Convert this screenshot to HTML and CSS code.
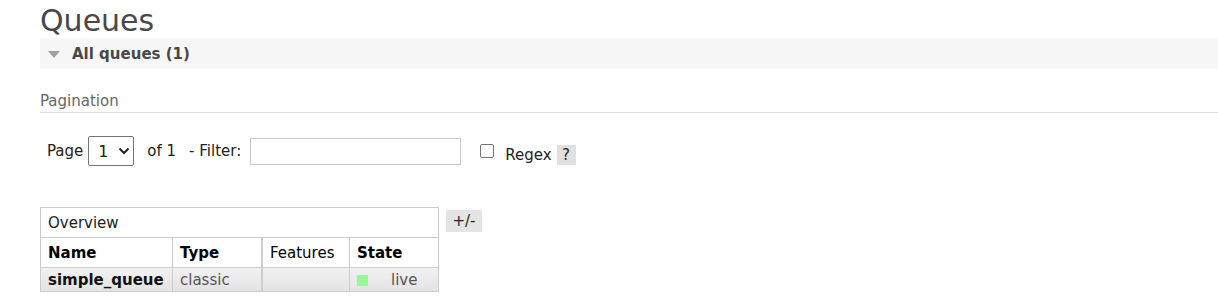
FILE: index.html
```html
<!DOCTYPE html>
<html>
<head>
<meta charset="utf-8">
<link rel="stylesheet" href="styles.css">
</head>
<body>
<div class="main">
  <h1 class="title">Queues</h1>
  <div class="section">
    <h2 class="section-head"><span class="tri"></span>All queues (1)</h2>
    <div class="section-body">
      <h3 class="pag-title">Pagination</h3>
      <div class="pag-row">
        <span class="lbl">Page</span>
        <div class="select"><span>1</span><svg class="chev" width="12" height="8" viewBox="0 0 12 8"><path d="M1.5 1.5 L6 6 L10.5 1.5" fill="none" stroke="#222" stroke-width="2"/></svg></div>
        <span class="lbl of">of 1</span>
        <span class="lbl filt">- Filter:</span>
        <div class="input"></div>
        <div class="check"></div>
        <span class="lbl regex">Regex</span>
        <span class="help">?</span>
      </div>
      <div class="table-wrap">
        <table class="list">
          <thead>
            <tr><th colspan="4" class="ov">Overview</th></tr>
            <tr>
              <th class="c-name b">Name</th>
              <th class="c-type b">Type</th>
              <th class="c-feat">Features</th>
              <th class="c-state b">State</th>
            </tr>
          </thead>
          <tbody>
            <tr class="alt">
              <td class="b dark">simple_queue</td>
              <td>classic</td>
              <td class="c-feat"></td>
              <td><span class="dot"></span><span class="live">live</span></td>
            </tr>
          </tbody>
        </table>
        <span class="plusminus">+/-</span>
      </div>
    </div>
  </div>
</div>
</body>
</html>
```
FILE: styles.css
```css
html, body { margin: 0; padding: 0; background: #fff; }
body { font-family: "DejaVu Sans", Verdana, sans-serif; color: #484848; }
.main { padding-left: 40px; }
.title {
  margin: 0;
  padding-top: 3px;
  font-size: 30px;
  line-height: 35px;
  font-weight: normal;
  color: #484848;
}
.section-head {
  margin: 0;
  height: 31px;
  display: flex;
  align-items: center;
  background: #f7f7f7;
  font-size: 15px;
  font-weight: bold;
  color: #484848;
  padding-left: 8px;
}
.tri {
  width: 0; height: 0;
  border-left: 6px solid transparent;
  border-right: 6px solid transparent;
  border-top: 7px solid #a0a0a0;
  margin-right: 12px;
  margin-top: 1px;
}
.pag-title {
  margin: 23px 0 0 0;
  font-size: 15px;
  font-weight: normal;
  color: #666;
  line-height: 18px;
  padding-bottom: 2px;
  border-bottom: 1px solid #ddd;
}
.pag-row {
  display: flex;
  align-items: center;
  height: 30px;
  margin-top: 23px;
  padding-left: 7px;
  font-size: 15px;
  color: #222;
}
.select {
  width: 44px; height: 28px;
  border: 1px solid #767676;
  border-radius: 2px;
  margin-left: 5px;
  display: flex; align-items: center;
  box-sizing: content-box;
  font-size: 16px;
}
.select span { margin-left: 9px; }
.chev { margin-left: 9px; }
.of { margin-left: 13px; }
.filt { margin-left: 13px; }
.input {
  width: 209px; height: 25px;
  border: 1px solid #c8c8c8;
  margin-left: 9px;
}
.check {
  width: 12px; height: 12px;
  border: 1px solid #767676;
  border-radius: 2px;
  margin-left: 19px;
}
.regex { margin-left: 11px; margin-top: 8px; }
.help {
  background: #e0e0e0;
  width: 19px; height: 20px;
  margin-left: 5px;
  margin-top: 8px;
  display: flex; align-items: center; justify-content: center;
  font-size: 15px;
}
.table-wrap {
  margin-top: 41px;
  display: flex;
  align-items: flex-start;
}
table.list {
  border-collapse: collapse;
  font-size: 15px;
}
table.list th, table.list td {
  border: 1px solid #ccc;
  text-align: left;
  padding: 0 7px;
  white-space: nowrap;
}
table.list th { height: 29px; color: #000; font-weight: normal; }
th.ov { width: 382px; color: #222 !important; }
.b { font-weight: bold !important; }
.c-name { width: 117px; }
.c-type { width: 74px; }
.c-feat { width: 72px; border-left: 2px solid #ccc !important; }
.c-state { width: 74px; }
table.list td { height: 23px; color: #555; }
td.dark { color: #111 !important; }
tr.alt { background: linear-gradient(#f2f2f2, #e2e2e2); }
.dot {
  display: inline-block;
  width: 11px; height: 11px;
  background: #98f898;
  vertical-align: -1px;
}
.live { margin-left: 23px; }
.plusminus {
  margin-left: 7px;
  margin-top: 3px;
  background: #e4e4e4;
  width: 36px; height: 22px;
  display: flex; align-items: center; justify-content: center;
  font-size: 15px;
  color: #222;
}
```
